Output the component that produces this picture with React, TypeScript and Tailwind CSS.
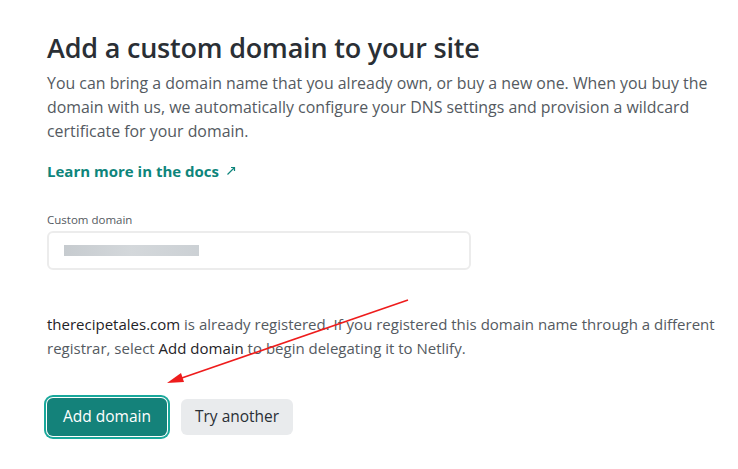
export default function App() {
  return (
    <div className="relative w-[738px] h-[469px] bg-white font-['Open_Sans',sans-serif] overflow-hidden">
      <div className="pl-[47px] pt-[30px] pr-[20px]">
        <h1 className="text-[27px] leading-[36px] font-semibold text-[#2a2f35] tracking-[-0.2px]">
          Add a custom domain to your site
        </h1>
        <p className="mt-[5px] text-[15.9px] leading-[24px] text-[#545a61] w-[680px]">
          You can bring a domain name that you already own, or buy a new one. When you buy the domain with us, we automatically configure your DNS settings and provision a wildcard certificate for your domain.
        </p>
        <a className="mt-[16px] inline-flex items-center gap-[7px] text-[15px] leading-[24px] font-bold text-[#0e857b]">
          Learn more in the docs
          <svg width="10" height="10" viewBox="0 0 10 10" fill="none" stroke="currentColor" strokeWidth="1.2">
            <path d="M1.5 8.5 L8.5 1.5 M5 1.5 H8.5 V5" />
          </svg>
        </a>
        <div className="mt-[29px]">
          <label className="block text-[11.5px] leading-[16px] text-[#545a61]">Custom domain</label>
          <div className="mt-[3px] w-[424px] h-[39px] border-2 border-[#ececec] rounded-[6px] flex items-center px-[15px]">
            <span className="h-[11px] w-[135px] bg-gradient-to-r from-[#b8bec3] via-[#c9ced2] to-[#bfc5ca] opacity-80" />
          </div>
        </div>
        <p className="mt-[42px] text-[15px] leading-[24px] text-[#545a61] w-[690px]">
          <span className="text-[#1f2328]">therecipetales.com</span> is already registered. If you registered this domain name through a different registrar, select <span className="text-[#1f2328]">Add domain</span> to begin delegating it to Netlify.
        </p>
        <div className="mt-[38px] flex items-center gap-[14px]">
          <button className="h-[38px] px-[16px] rounded-[6px] bg-[#14827a] text-white text-[15.5px] ring-2 ring-[#19a89b] ring-offset-1 ring-offset-white">
            Add domain
          </button>
          <button className="h-[36px] px-[14px] rounded-[6px] bg-[#e9ebed] text-[#2a2f35] text-[15.5px]">
            Try another
          </button>
        </div>
      </div>
      <svg className="absolute left-0 top-0 pointer-events-none" width="738" height="469">
        <line x1="408" y1="300" x2="176" y2="380" stroke="#ee1c1c" strokeWidth="1.5" />
        <polygon points="167,383 181,373 184,382" fill="#ee1c1c" />
      </svg>
    </div>
  );
}
